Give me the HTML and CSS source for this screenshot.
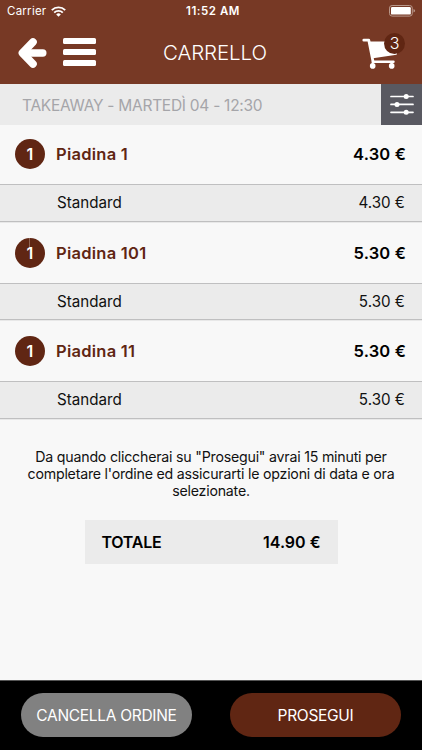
FILE: index.html
```
<!DOCTYPE html>
<html lang="it">
<head>
<meta charset="utf-8">
<title>Carrello</title>
<link rel="stylesheet" href="styles.css">
</head>
<body>
<div class="app">
  <header class="header">
    <div class="status">
      <span class="carrier">Carrier
        <svg class="wifi" width="15" height="11" viewBox="0 0 15 11" fill="none" stroke="#fff" stroke-width="1.9"><path d="M.8 4.1a9.6 9.6 0 0 1 13.4 0M3.2 6.6a6.2 6.2 0 0 1 8.6 0"/><path d="M5.2 8.4a3.4 3.4 0 0 1 4.6 0L7.5 10.8z" fill="#fff" stroke="none"/></svg>
      </span>
      <span class="clock">11:52 AM</span>
      <svg class="battery" width="27" height="12" viewBox="0 0 27 12"><rect x=".5" y=".5" width="22.8" height="10.6" rx="2.6" fill="none" stroke="#b9988b"/><rect x="2" y="2" width="19.8" height="7.6" rx="1.2" fill="#fff"/><path d="M24.5 4q1.6.5 1.6 1.8t-1.6 1.8z" fill="#b9988b"/></svg>
    </div>
    <nav class="nav">
      <svg class="back" width="30" height="32" viewBox="0 0 30 32" fill="none" stroke="#fff" stroke-linecap="round" stroke-linejoin="round"><path d="M15 5 4.4 16 15 27" stroke-width="7.6"/><path d="M5 16h19.8" stroke-width="7.4"/></svg>
      <svg class="menu" width="34" height="28" viewBox="0 0 34 28" fill="#fff"><rect y="0" width="33" height="6" rx="1.5"/><rect y="11" width="33" height="6" rx="1.5"/><rect y="22" width="33" height="6" rx="1.5"/></svg>
      <h1 class="title">CARRELLO</h1>
      <div class="cart">
        <svg width="36" height="32" viewBox="0 0 36 32" fill="none" stroke="#fff"><path d="M1.8 2.2h5l4.2 21.3" stroke-width="2.8" stroke-linecap="round" stroke-linejoin="round"/><path d="M7 3.6h28v12.2l-.5 1L11 20.2z" fill="#fff" stroke="none"/><path d="M11 23.8h20.5" stroke-width="2.4" stroke-linecap="round"/><path d="M10.7 24v4M29.7 24v4" stroke-width="2"/><circle cx="10.7" cy="27.9" r="2.8" fill="#fff" stroke="none"/><circle cx="29.7" cy="27.9" r="2.8" fill="#fff" stroke="none"/></svg>
        <span class="badge">3</span>
      </div>
    </nav>
  </header>
  <div class="slot">
    <span class="slot-text">TAKEAWAY - MARTEDÌ 04 - 12:30</span>
    <span class="filter"><svg width="26" height="22" viewBox="0 0 26 22" fill="#fff" stroke="#fff" stroke-width="1.7" stroke-linecap="round"><path d="M2 3.5h22M2 11.4h22M2 19.3h22"/><g stroke="none"><circle cx="17.2" cy="3.5" r="2.5"/><circle cx="8" cy="11.4" r="2.5"/><circle cx="17.2" cy="19.3" r="2.5"/></g></svg></span>
  </div>
  <main class="content">
    <section class="entry first">
      <div class="item"><span class="qty">1</span><span class="name">Piadina 1</span><span class="price">4.30 €</span></div>
      <div class="option"><span>Standard</span><span class="sub">4.30 €</span></div>
    </section>
    <section class="entry second">
      <div class="item"><span class="qty marked">1</span><span class="name">Piadina 101</span><span class="price">5.30 €</span></div>
      <div class="option"><span>Standard</span><span class="sub">5.30 €</span></div>
    </section>
    <section class="entry last">
      <div class="item"><span class="qty">1</span><span class="name">Piadina 11</span><span class="price">5.30 €</span></div>
      <div class="option"><span>Standard</span><span class="sub">5.30 €</span></div>
    </section>
    <p class="note">Da quando cliccherai su "Prosegui" avrai 15 minuti per<br>completare l'ordine ed assicurarti le opzioni di data e ora<br>selezionate.</p>
    <div class="total"><span class="total-label">TOTALE</span><span class="total-value">14.90 €</span></div>
  </main>
  <footer class="footer">
    <span class="button cancel">CANCELLA ORDINE</span>
    <span class="button proceed">PROSEGUI</span>
  </footer>
</div>
</body>
</html>
```
FILE: styles.css
```
* { box-sizing: border-box; }
body { margin: 0; }
.app {
  width: 422px; height: 750px; overflow: hidden;
  display: flex; flex-direction: column;
  background: #f8f8f8; color: #111;
  font-family: Inter, "Liberation Sans", sans-serif;
  font-size: 16px; white-space: nowrap;
}
.header { height: 84px; background: #773925; color: #fff; }
.status {
  height: 22px; padding: 0 6px 0 7px;
  display: grid; grid-template-columns: 1fr auto 1fr; align-items: center;
  font-size: 11.5px;
}
.carrier { display: flex; align-items: center; gap: 5px; letter-spacing: .25px; }
.clock { font-weight: 600; letter-spacing: .55px; margin-left: 3px; }
.battery { justify-self: end; margin-top: -1px; }
.nav { height: 62px; display: flex; align-items: center; padding: 0 17px 0 18px; }
.back { margin-right: 15px; }
.menu { margin-right: 66px; margin-top: -2px; }
.title { margin: -2px 0 0; font-size: 20.5px; font-weight: 300; width: 199px; letter-spacing: -.1px; }
.cart { position: relative; height: 32px; margin-top: 1px; }
.badge {
  position: absolute; left: 22px; top: -5px; width: 21px; height: 21px;
  border-radius: 50%; background: #602613; text-align: center;
  font-size: 16px; line-height: 21px; font-weight: 300;
}
.slot { height: 41px; background: #ebebeb; display: flex; align-items: center; }
.slot-text { flex: 1; padding: 1px 0 0 22px; color: #a5a5a9; font-size: 15.5px; letter-spacing: -.27px; }
.filter { width: 41px; height: 41px; background: #595961; display: flex; align-items: center; justify-content: center; padding-bottom: 2px; }
.content { flex: 1; }
.item { height: 61px; display: flex; align-items: center; padding: 0 16px 0 15px; }
.first .item { height: 59px; padding-bottom: 1px; }
.qty {
  width: 30px; height: 30px; border-radius: 50%; margin-right: 11px;
  background: #602613; color: #fff; text-align: center; line-height: 30px; font-weight: 600;
}
.marked { background: linear-gradient(#8f6554, #8f6554) 14px 0 / 1px 9px no-repeat #602613; }
.name { flex: 1; color: #602613; font-size: 16.5px; font-weight: 600; letter-spacing: .25px; }
.price { color: #000; font-size: 16.5px; font-weight: 600; letter-spacing: .15px; }
.option {
  height: 38px; display: flex; justify-content: space-between; align-items: center;
  padding: 0 17px 1px 57px; background: #ebebeb;
  border-top: 1px solid #bfbfc0; border-bottom: 1px solid #bfbfc0;
  box-shadow: 0 1px 0 #e8e8e8;
  font-size: 15.2px;
}
.second .option { height: 37px; }
.note { margin: 30px 0 0; font-size: 14.2px; letter-spacing: -.22px; line-height: 16.8px; text-align: center; }
.total {
  width: 253px; height: 44px; margin: 21px 0 0 84.5px; padding: 0 17px;
  background: #ebebeb; display: flex; align-items: center; justify-content: space-between;
  font-weight: 600; color: #000;
}
.total-label { letter-spacing: -.25px; }
.footer { height: 70px; background: #000; border-top: 1px solid #555; padding: 12px 21px; display: flex; justify-content: space-between; }
.button { width: 171px; height: 44px; border-radius: 22px; line-height: 45px; text-align: center; color: #fff; font-size: 15.5px; letter-spacing: -.3px; }
.cancel { background: #818181; }
.proceed { background: #602613; }
```
